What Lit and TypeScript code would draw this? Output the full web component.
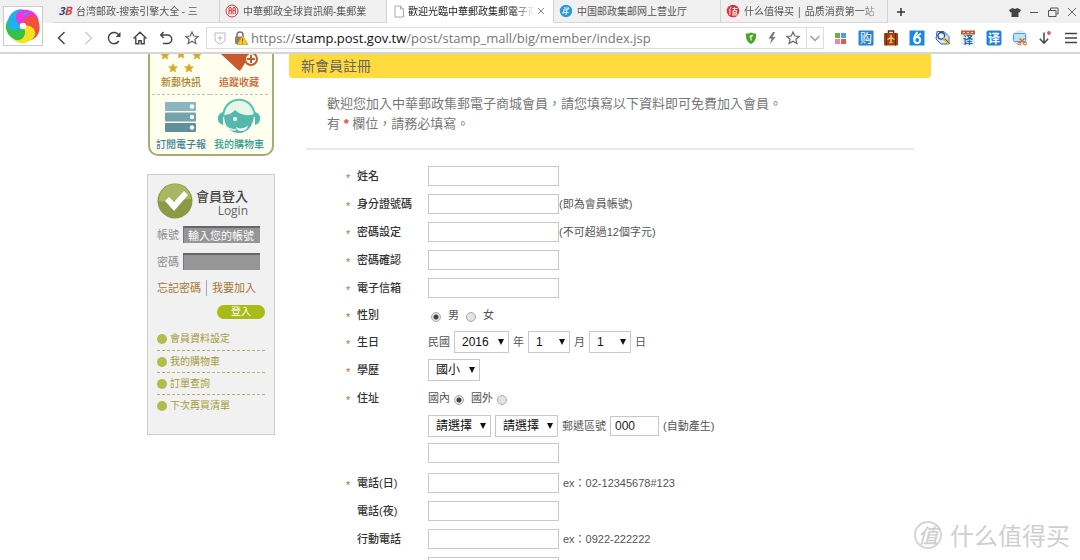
import { LitElement, html, css, svg, nothing } from "lit";
import { customElement, property } from "lit/decorators.js";

const bolt = svg`<path d="M9 2 4.500 8.500h3L6 14l5.500-7h-3L11 2z" fill="#777"/>`;

const glyphs: Record<string, unknown> = {
  back: svg`<path d="M10.500 2 4.500 8l6 6" fill="none" stroke="#444" stroke-width="1.500"/>`,
  forward: svg`<path d="M5.500 2l6 6-6 6" fill="none" stroke="#ccc" stroke-width="1.500"/>`,
  reload: svg`<path d="M12.800 11A5.600 5.600 0 1 1 13 5.500" fill="none" stroke="#444" stroke-width="1.500"/><path d="M14.500 2v5H9.600z" fill="#444"/>`,
  home: svg`<path d="M1.500 8.500 8 2.200l6.500 6.300M3.800 7.500v6.300h3v-3h2.400v3h3V7.500" fill="none" stroke="#444" stroke-width="1.400"/>`,
  undo: svg`<path d="M5.500 2 2.800 5l2.700 3M3 5h6.500a4.200 4.200 0 0 1 0 8.500H5" fill="none" stroke="#444" stroke-width="1.500"/>`,
  star: svg`<path d="m8 2 1.800 4 4.400.4-3.300 2.900 1 4.300L8 11.300l-3.900 2.300 1-4.300L1.800 6.400 6.200 6z" fill="none" stroke="#666" stroke-width="1.200"/>`,
  guard: svg`<path d="M3 3h10v6c0 3-3 4-5 5-2-1-5-2-5-5z" fill="none" stroke="#bbb"/><path d="M8 5.500v5M5.500 8h5" stroke="#bbb"/>`,
  lock: svg`<path d="M4 7V5a3 3 0 0 1 6 0v2" fill="none" stroke="#777" stroke-width="1.500"/><rect x="2" y="6.500" width="9" height="7.500" rx="1" fill="#8d8466"/><path d="m9.500 5.500 5.500 9H4z" fill="#f8cb2b" stroke="#b98a12" stroke-width=".6"/><path d="M9.500 8.500v3.200M9.500 12.500v1" stroke="#8a6408"/>`,
  shield: svg`<path d="M8 2.500c2 1 3.500 1 5.200 1 0 5.500-1.200 8.500-5.200 10.500C4 12 2.800 9 2.800 3.500c1.700 0 3.200 0 5.200-1z" fill="#49a52a"/><path d="M8 5v5.500M8 6l2-.5M8 6l-1.500 1" stroke="#d9f3c8" stroke-width="1.300"/>`,
  bolt,
  chevron: svg`<path d="m3.500 6 4.500 4.500L12.500 6" fill="none" stroke="#999" stroke-width="1.300"/>`,
  grid: svg`<path d="M3 3h5v5H3z" fill="#69ad4c"/><path d="M9 3h5v5H9z" fill="#4aa3df"/><path d="M3 9h5v5H3z" fill="#e88bab"/><path d="M9 9h5v5H9z" fill="#e05c50"/>`,
  shop: svg`<rect x=".5" y=".5" width="15" height="15" rx="1" fill="#2b82cf"/><text x="8" y="12.500" font-size="12" text-anchor="middle" fill="#fff">购</text>`,
  travel: svg`<path d="M5.500 3V1h5v2" fill="none" stroke="#5b2a10" stroke-width="1.500"/><rect x="1" y="3" width="14" height="12.500" rx="1" fill="#a34016"/><path d="M3.500 3v12.500M12.500 3v12.500" stroke="#6b260a"/><path d="M8 5v8M4.500 9.500 8 7.500l3.500 2M6.500 12.800 8 12l1.500.8" stroke="#ffd36b" stroke-width="1.400" fill="none"/>`,
  six: svg`<rect x=".5" y=".5" width="15" height="15" fill="#1a88e6"/><path d="M8.500 2C6 4.500 5.200 7 5.200 9.800" stroke="#fff" stroke-width="2" fill="none"/><circle cx="8.200" cy="10" r="2.900" fill="none" stroke="#fff" stroke-width="2"/><path d="m8 6 4-2.500" stroke="#fff" stroke-width="1.500"/>`,
  lens: svg`<path d="M2 1.500h7l5 5V14H6L1 9z" fill="#cfe3fb" stroke="#3a62b8"/><circle cx="6.300" cy="5.800" r="3.300" fill="#eaf5ff" stroke="#24489c" stroke-width="1.300"/><path d="m8.500 8 5.500 5.500" stroke="#e4b71a" stroke-width="2.800"/><path d="m10 9 4.500 4.500" stroke="#263f7c" stroke-width=".8"/>`,
  calendar: svg`<rect x="1" y=".5" width="14" height="15" fill="#e7edf2"/><path d="M1 .5h14v4H1z" fill="#c65d34"/><path d="M3 2.500h2M7 2.500h2M11 2.500h2" stroke="#fbe2d3"/><text x="8" y="14" font-size="10" font-weight="700" text-anchor="middle" fill="#216a9d">译</text>`,
  translate: svg`<rect x=".5" y=".5" width="15" height="15" rx="2" fill="#1f83d8"/><text x="8" y="12.500" font-size="12" text-anchor="middle" font-weight="700" fill="#fff">译</text>`,
  capture: svg`<circle cx="8" cy="8" r="7.700" fill="#e6e6e6"/><rect x="1.500" y="3.500" width="12" height="8" rx="1" fill="#bfe1f7" stroke="#4f9ed0"/><path d="m7.500 8.500 5 4.500M12.500 8.500l-5 4.500" stroke="#cf6a2c" stroke-width="1.200"/><circle cx="7.300" cy="13.500" r="1.500" fill="none" stroke="#cf6a2c"/><circle cx="13" cy="13.500" r="1.500" fill="none" stroke="#cf6a2c"/>`,
  download: svg`<path d="M7 2.500V13M2.800 8.800 7 13.200l4.200-4.400" fill="none" stroke="#444" stroke-width="1.500"/><circle cx="12" cy="3" r="1.900" fill="#dd5a5a"/>`,
  menu: svg`<path d="M2 3.500h12M2 8h12M2 12.500h12" stroke="#444" stroke-width="1.500"/>`,
  shirt: svg`<path d="M5.500 4 8 5l2.500-1L14 6l-1.300 2.500-1.200-.5v5h-7V8l-1.200.5L2 6z" fill="#444"/>`,
  minimize: svg`<path d="M4 8.500h8" stroke="#555"/>`,
  restore: svg`<path d="M3.500 6.500h7.500v6H3.500zM5.500 6V4h7.500v6H11.500" fill="none" stroke="#555"/>`,
  close: svg`<path d="m4 4 8 8M12 4l-8 8" stroke="#666" fill="none"/>`,
  plus: svg`<path d="M8 4v8M4 8h8" stroke="#333" stroke-width="1.500"/>`,
  page: svg`<path d="M4 3h5.500L12.500 6v8H4zM9.500 3v3h3" fill="#fff" stroke="#aaa"/>`,
  search38: svg`<text x="4.500" y="12" font-size="11" font-weight="700" font-style="italic" text-anchor="middle" fill="#254a8e">3</text><text x="11" y="12" font-size="11" font-weight="700" font-style="italic" text-anchor="middle" fill="#d23a36">B</text>`,
  postRed: svg`<circle cx="8" cy="8" r="6" fill="#fff" stroke="#c9383c"/><path d="M7.200 4 5 5v6.500M4.500 7.200h3M11.500 4 9 5v6.500M8.500 7.200h3M7.200 5v6.500M11.300 5v6.500" fill="none" stroke="#c9383c" stroke-width="1.100"/>`,
  postBlue: svg`<circle cx="8" cy="8" r="6.200" fill="#2c9bd8"/><path d="M6 5h5L9.500 7H5M5 11l1-4M4.500 9.500h6M9 5.500 8 12" stroke="#e2f4ff" fill="none"/>`,
  smzdm: svg`<circle cx="8" cy="8" r="6.300" fill="#d9363c"/><path d="M6 4 4 8M5 7v5M7.500 5.500h5M9.500 4v3M8 7.500h3.500V11H8zM8 9.300h3.500M7 12h5.500" stroke="#ffe5e5" fill="none"/>`,
};

@customElement("glyph-icon")
class GlyphIcon extends LitElement {
  @property() name = "";
  static styles = css`
    :host { display: block; flex: none; width: 16px; height: 16px; }
    svg { display: block; width: 100%; height: 100%; font-family: "Noto Sans CJK SC", sans-serif; }
  `;
  render() {
    return html`<svg viewBox="0 0 16 16" aria-hidden="true">${glyphs[this.name]}</svg>`;
  }
}

@customElement("browser-bar")
class BrowserBar extends LitElement {
  static styles = css`
    :host { display: block; position: relative; border-bottom: 2px solid #d6d6d6; background: #fff; }
    button { border: 0; padding: 0; background: none; display: grid; place-items: center; }
    .logo { position: absolute; left: 3px; top: 6px; width: 40px; height: 40px; border: 1px solid #ccc; background: #fff; box-sizing: border-box; }
    .logo svg { width: 36px; height: 36px; }
    .tabs { display: flex; height: 23px; padding-left: 53px; background: #f0f0f0; align-items: stretch; }
    .tab { flex: 0 1 167px; min-width: 0; box-sizing: border-box; display: flex; align-items: center; gap: 3px; padding: 0 4px; border-right: 1px solid #d2d2d2; border-bottom: 1px solid #d8d8d8; color: #555; text-decoration: none; font: 10px/16px "Noto Sans", "Noto Sans CJK SC", sans-serif; }
    .tab.active { background: #fff; border-bottom-color: #fff; color: #222; padding-right: 6px; gap: 1px; }
    .name { flex: 1; overflow: hidden; white-space: nowrap; mask-image: linear-gradient(to right, #000 85%, transparent); }
    .name.whole { mask-image: none; }
    .tab.active glyph-icon:last-child { width: 12px; height: 12px; }
    .new { width: 26px; }
    .window { margin-left: auto; display: flex; gap: 3px; }
    .tools { display: flex; align-items: center; height: 29px; padding-left: 49px; }
    .nav { display: flex; }
    .nav button { width: 26px; height: 24px; }
    .address { flex: 1; min-width: 0; display: flex; align-items: center; height: 20px; margin-left: 1px; border: 1px solid #ddd; padding-left: 5px; gap: 5px; }
    .url { flex: 1; overflow: hidden; white-space: nowrap; color: #777; font: 13px/20px "Open Sans", sans-serif; margin-left: -3px; }
    .host { color: #111; }
    .more { border-left: 1px solid #ddd; height: 20px; width: 17px; }
    .extras { flex: 0 0 247px; display: flex; justify-content: space-between; margin: 0 1px 0 8px; }
  `;
  tab(icon: string, text: string, cls = "", whole = false) {
    return html`<a class="tab ${cls}" href="#"><glyph-icon name=${icon}></glyph-icon><span class="name ${whole ? "whole" : ""}">${text}</span>${cls === "active" ? html`<glyph-icon name="close"></glyph-icon>` : nothing}</a>`;
  }
  buttons(list: [string, string][]) {
    return list.map(([icon, label]) => html`<button aria-label=${label}><glyph-icon name=${icon}></glyph-icon></button>`);
  }
  render() {
    const petals = ["#f233d8", "#f4503a", "#f6e21c", "#35c046", "#1fb0f2"];
    return html`
      <nav class="tabs">
        ${this.tab("search38", "台湾邮政-搜索引擎大全 - 三")}
        ${this.tab("postRed", "中華郵政全球資訊網-集郵業")}
        ${this.tab("page", "歡迎光臨中華郵政集郵電子商", "active")}
        ${this.tab("postBlue", "中国邮政集邮网上营业厅", "", true)}
        ${this.tab("smzdm", "什么值得买 | 品质消费第一站")}
        <button class="new" aria-label="新标签"><glyph-icon name="plus"></glyph-icon></button>
        <div class="window">${this.buttons([["shirt", "皮肤"], ["minimize", "最小化"], ["restore", "还原"], ["close", "关闭"]])}</div>
      </nav>
      <div class="tools">
        <div class="nav">${this.buttons([["back", "后退"], ["forward", "前进"], ["reload", "刷新"], ["home", "主页"], ["undo", "恢复"], ["star", "收藏"]])}</div>
        <div class="address">
          <glyph-icon name="guard"></glyph-icon><glyph-icon name="lock"></glyph-icon>
          <span class="url">https://<span class="host">stamp.post.gov.tw</span>/post/stamp_mall/big/member/index.jsp</span>
          ${this.buttons([["shield", "安全"], ["bolt", "极速"], ["star", "收藏网址"]])}
          <button class="more" aria-label="展开"><glyph-icon name="chevron"></glyph-icon></button>
        </div>
        <div class="extras">
          ${this.buttons([["grid", "应用"], ["shop", "购物"], ["travel", "旅行"], ["six", "助手"], ["lens", "搜索"], ["calendar", "日历翻译"], ["translate", "翻译"], ["capture", "截图"], ["download", "下载"], ["menu", "菜单"]])}
        </div>
      </div>
      <button class="logo" aria-label="浏览器">
        <svg viewBox="-18 -18 36 36" aria-hidden="true">
          ${petals.map((c, i) => svg`<path d="M0 0C-7-1-11-9-6-14-1-18 9-17 13-11 16-7 15-3 13 0 9-6 3-5 0 0z" fill=${c} transform="rotate(${i * 72 + 8})"/>`)}
          <path d="M0 0C-7-1-11-9-6-14-3-16 0-16.500 3-16-2-12-3-6 0 0z" fill="#f233d8" transform="rotate(8)"/>
          <circle r="3.200" fill="#fff"/>
        </svg>
      </button>`;
  }
}

@customElement("side-panel")
class SidePanel extends LitElement {
  static styles = css`
    :host { display: block; font: 11px/16px "Liberation Sans", "Noto Sans CJK TC", sans-serif; }
    a { text-decoration: none; color: inherit; }
    .quick { display: grid; grid-template-columns: 1fr 1fr; margin: 0 1px; padding: 0 4px 0 2px; border: 2px solid #a3ad74; border-top: 0; border-radius: 0 0 10px 10px; background: #fffff0; }
    .tile { display: grid; justify-items: center; font-size: 10px; line-height: 14px; font-weight: 500; white-space: nowrap; }
    .tile svg { display: block; }
    .top { padding-bottom: 4px; border-bottom: 1px dashed #c2c4b4; }
    .low { padding: 3px 0 2px; }
    .gold { color: #a97f1e; } .red { color: #cf5a2c; } .slate { color: #3d7f95; } .teal { color: #2f9d93; }
    .login { margin-top: 18px; border: 1px solid #ccc; background: #f1f1f1; padding: 8px 9px 18px; }
    .head { display: flex; align-items: center; gap: 3px; margin-bottom: 2px; }
    .head svg { width: 36px; height: 36px; flex: none; }
    .title { margin: 0; padding-top: 5px; font-size: 13px; line-height: 15px; font-weight: 500; color: #444; white-space: nowrap; }
    .sub { display: block; text-align: right; font: 12px/14px "Open Sans", sans-serif; color: #666; }
    .row { display: grid; grid-template-columns: 22px 77px; gap: 4px; align-items: center; height: 27px; color: #8d8d8d; }
    .row input { box-sizing: border-box; width: 100%; height: 17px; border: 0; border-top: 2px solid #666; border-left: 1px solid #777; border-radius: 0; padding: 0 4px; background: #969696; color: #fff; font: inherit; }
    .row input::placeholder { color: #fff; opacity: 1; }
    .links { display: flex; margin-top: 5px; color: #a57a35; white-space: nowrap; }
    .links a + a { margin-left: 5px; padding-left: 5px; border-left: 1px solid #9ca6c4; }
    .enter { display: block; margin: 9px 0 0 auto; border: 0; border-radius: 7px; width: 48px; height: 14px; padding: 0; background: #a8bb16; color: #fff; font: 10px/14px "Liberation Sans", "Noto Sans CJK TC", sans-serif; }
    .menu { list-style: none; margin: 9px 0 0; padding: 0; }
    .menu li { box-sizing: border-box; height: 22px; display: flex; align-items: center; gap: 3px; font-size: 10px; color: #a59a3c; }
    .menu li + li { border-top: 1px dashed #b8b060; }
    .menu li::before { content: ""; width: 10px; height: 10px; border-radius: 50%; background: #b1bd4a; }
  `;
  render() {
    const star = (x: number, y: number) => svg`<path d="m0-5 1.500 3.200 3.500.4-2.600 2.400.7 3.500L0 2.800-3.100 4.500l.7-3.500L-5-1.400l3.500-.4z" fill="#d9a92e" transform="translate(${x} ${y})"/>`;
    return html`
      <nav class="quick">
        <a class="tile top gold" href="#"><svg width="44" height="22" viewBox="0 0 44 22">${star(6, 1)}${star(22, 0)}${star(38, 1)}${star(14, 14)}${star(30, 14)}</svg>新郵快訊</a>
        <a class="tile top red" href="#"><svg width="44" height="22" viewBox="0 0 44 22"><path d="M4 0h26v6L23 17 20 15z" fill="#c9582b"/><circle cx="34" cy="5" r="6" fill="#fffff0" stroke="#c9582b" stroke-width="2"/><path d="M34 1v8M30 5h8" stroke="#c9582b" stroke-width="2"/></svg>追蹤收藏</a>
        <a class="tile low slate" href="#"><svg width="44" height="40" viewBox="0 0 44 40">${["#8bb5bf", "#76a2ac", "#5f909d"].map((c, i) => svg`<rect x="6" y=${4 + i * 10.5} width="31" height="9" rx="1" fill=${c}/><circle cx="33" cy=${8.5 + i * 10.5} r="2.200" fill="#fff"/>`)}</svg>訂閱電子報</a>
        <a class="tile low teal" href="#"><svg width="44" height="40" viewBox="0 0 44 40"><path d="M6 19C7-4 37-4 38 19" fill="#e6f7ea" stroke="#5bbfb0" stroke-width="2"/><path d="M7 17c6 0 9-3 11-5 4 4 12 7 19 4 0 11-6 19-15 19S7 28 7 17z" fill="#55b8ac"/><path d="M6 14c-7 2-7 11 0 13zM38 14c7 2 7 11 0 13z" fill="#55b8ac"/><path d="M19 29c3 2 7 2 12-1-1 4-4 5-7 5s-5-2-5-4z" fill="#fff"/><circle cx="18" cy="21" r="2.200" fill="#dff4ea"/><path d="M7 26c3 5 7 6 12 6" fill="none" stroke="#dff4ea" stroke-width="1.500"/></svg>我的購物車</a>
      </nav>
      <form class="login">
        <div class="head">
          <svg viewBox="0 0 36 36" aria-hidden="true"><circle cx="18" cy="18" r="17.500" fill="#8a9a45"/><path d="M2 18a16 16 0 0 1 32-2C24 16 12 20 2 18z" fill="#a9b760"/><path d="m8 18 4-4 5 5L27 8l4 4-14 16z" fill="#fff"/></svg>
          <h2 class="title">會員登入<span class="sub">Login</span></h2>
        </div>
        <div class="row"><label for="acc">帳號</label><input id="acc" placeholder="輸入您的帳號"></div>
        <div class="row"><label for="pw">密碼</label><input id="pw" type="password"></div>
        <div class="links"><a href="#">忘記密碼</a><a href="#">我要加入</a></div>
        <button class="enter" type="button">登入</button>
        <ul class="menu">${["會員資料設定", "我的購物車", "訂單查詢", "下次再買清單"].map((t) => html`<li><a href="#">${t}</a></li>`)}</ul>
      </form>`;
  }
}

@customElement("signup-form")
class SignupForm extends LitElement {
  static styles = css`
    :host { display: block; font: 11px/16px "Liberation Sans", "Noto Sans CJK TC", sans-serif; color: #555; }
    .title { margin: 0; padding: 0 12px; border-radius: 0 0 4px 4px; background: #ffdb3e; color: #666; font-size: 14px; line-height: 24px; font-weight: 400; }
    .intro { margin: 16px 17px 0; padding: 0 21px 14px; border-bottom: 2px solid #e9e9e9; font-size: 13px; line-height: 20px; color: #777; }
    .intro p { margin: 0; }
    .intro b { color: #d2542a; }
    .fields { padding: 12px 0 0 57px; }
    .row { display: grid; grid-template-columns: 11px 71px 1fr; align-items: center; height: 28px; white-space: nowrap; }
    .row.choice { height: 26px; }
    .row.pick { height: 28px; }
    .row.line { height: 25px; margin-bottom: 4px; }
    .star { color: #c96b3c; font-size: 11px; line-height: 8px; padding-top: 4px; }
    .label { color: #333; font-weight: 500; }
    .cell { grid-column: 3; display: flex; align-items: center; }
    .gap { gap: 4px; }
    .text { box-sizing: border-box; width: 131px; height: 20px; border: 1px solid #c8c8c8; border-radius: 0; padding: 0 4px; background: #fff; color: #222; font: 12px/16px "Liberation Sans", sans-serif; }
    .text.zip { width: 49px; }
    .radio { appearance: none; width: 10px; height: 10px; margin: 3px 0 0; border: 1px solid #aaa; border-radius: 50%; background: #e4e4e4; }
    .lead .radio { margin-left: 3px; }
    .radio:checked { background: radial-gradient(circle, #444 0 2px, #e4e4e4 3px); }
    .drop { display: inline-grid; align-items: center; }
    .drop select { grid-area: 1 / 1; appearance: none; box-sizing: border-box; height: 22px; border: 1px solid #c8c8c8; border-radius: 0; padding: 0 0 0 7px; background: #fff; color: #111; font: 12px/16px "Liberation Sans", "Noto Sans CJK TC", sans-serif; }
    .drop svg { grid-area: 1 / 1; justify-self: end; width: 6px; height: 6px; margin-right: 5px; pointer-events: none; }
    .w55 { width: 55px; } .w42 { width: 42px; } .w52 { width: 52px; } .w63 { width: 63px; }
  `;
  drop(label: string, value: string, width: string) {
    return html`<span class="drop"><select class=${width} aria-label=${label}><option>${value}</option></select><svg viewBox="0 0 6 6" aria-hidden="true"><path d="M0 0h6L3 6z" fill="#111"/></svg></span>`;
  }
  field(id: string, label: string, required: boolean, note = "", gap = false, type = "text") {
    return html`<div class="row"><span class="star">${required ? "*" : ""}</span><label class="label" for=${id}>${label}</label><span class="cell ${gap ? "gap" : ""}"><input class="text" id=${id} type=${type}>${note ? html`<span>${note}</span>` : nothing}</span></div>`;
  }
  render() {
    return html`
      <h1 class="title">新會員註冊</h1>
      <div class="intro">
        <p>歡迎您加入中華郵政集郵電子商城會員，請您填寫以下資料即可免費加入會員。</p>
        <p>有 <b>*</b> 欄位，請務必填寫。</p>
      </div>
      <form class="fields">
        ${this.field("name", "姓名", true)}
        ${this.field("idno", "身分證號碼", true, "(即為會員帳號)")}
        ${this.field("pass", "密碼設定", true, "(不可超過12個字元)", false, "password")}
        ${this.field("pass2", "密碼確認", true, "", false, "password")}
        ${this.field("mail", "電子信箱", true)}
        <div class="row choice"><span class="star">*</span><span class="label">性別</span>
          <span class="cell gap lead"><input class="radio" type="radio" name="sex" id="male" checked><label for="male">&nbsp;男</label>
            <input class="radio" type="radio" name="sex" id="female"><label for="female">&nbsp;女</label></span></div>
        <div class="row pick"><span class="star">*</span><span class="label">生日</span>
          <span class="cell gap">民國${this.drop("年", "2016", "w55")}年${this.drop("月", "1", "w42")}月${this.drop("日", "1", "w42")}日</span></div>
        <div class="row pick"><span class="star">*</span><span class="label">學歷</span>
          <span class="cell">${this.drop("學歷", "國小", "w52")}</span></div>
        <div class="row"><span class="star">*</span><span class="label">住址</span>
          <span class="cell gap"><label for="home">國內</label><input class="radio" type="radio" name="area" id="home" checked>
            <label for="abroad">&nbsp;國外</label><input class="radio" type="radio" name="area" id="abroad"></span></div>
        <div class="row pick"><span class="cell gap">${this.drop("縣市", "請選擇", "w63")}${this.drop("鄉鎮", "請選擇", "w63")}<label for="zip">郵遞區號</label><input class="text zip" id="zip" value="000"><span>(自動產生)</span></span></div>
        <div class="row line"><span class="cell"><input class="text" aria-label="地址"></span></div>
        ${this.field("tel1", "電話(日)", true, "ex：02-12345678#123", true)}
        ${this.field("tel2", "電話(夜)", false)}
        ${this.field("mobile", "行動電話", false, "ex：0922-222222", true)}
        ${this.field("fax", "傳真號碼", false)}
      </form>`;
  }
}

@customElement("app-root")
class AppRoot extends LitElement {
  static styles = css`
    :host { display: flex; flex-direction: column; position: relative; height: 100vh; overflow: hidden; background: #fff; }
    browser-bar { flex: none; }
    .page { display: grid; grid-template-columns: 128px 1fr; gap: 14px; box-sizing: border-box; width: 100%; max-width: 786px; margin: 0 auto; padding-right: 2px; align-items: start; }
    .mark { position: absolute; right: 10px; bottom: 8px; display: flex; align-items: center; gap: 8px; color: #cfcfcf; font: 24px/34px "Noto Sans CJK SC", sans-serif; }
    .seal { display: grid; place-items: center; width: 28px; height: 28px; box-sizing: border-box; border: 2px solid #d6d6d6; border-radius: 50%; font-size: 20px; line-height: 24px; font-style: italic; font-weight: 500; }
  `;
  render() {
    return html`
      <browser-bar></browser-bar>
      <main class="page"><side-panel></side-panel><signup-form></signup-form></main>
      <div class="mark"><span class="seal">值</span><span>什么值得买</span></div>`;
  }
}
